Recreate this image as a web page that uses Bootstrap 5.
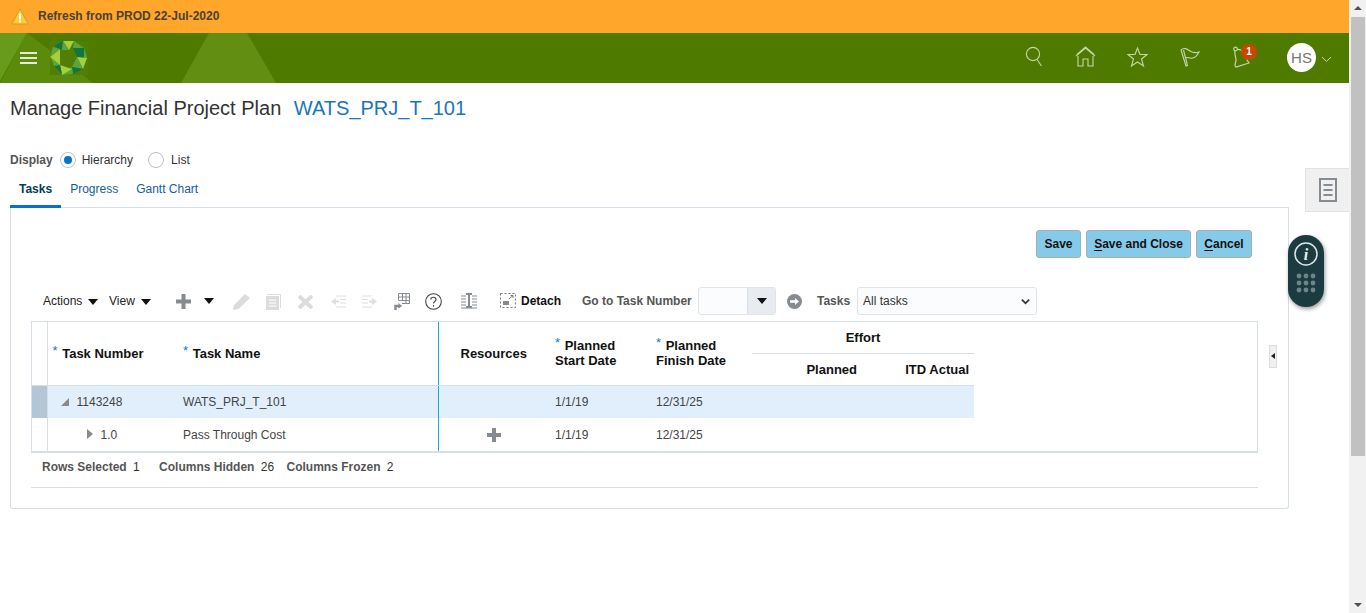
<!DOCTYPE html>
<html lang="en">
<head>
    <meta charset="UTF-8">
    <meta name="viewport" content="width=device-width, initial-scale=1.0">
    <title>Manage Financial Project Plan</title>
    <link href="https://cdn.jsdelivr.net/npm/bootstrap@5.3.0/dist/css/bootstrap.min.css" rel="stylesheet">
    <style>
        html, body { height: 100%; overflow: hidden; }
        body { font-family: "Liberation Sans", Arial, sans-serif; font-size: 12px; color: #333; background: #fff; }
        .page-shell { height: 613px; }
        .page-main { width: 1349px; height: 613px; position: relative; overflow: hidden; }
        .fake-scroll { width: 17px; height: 613px; background: #f1f1f1; position: relative; }
        .fake-thumb { width: 14px; height: 439px; margin: 17px 0 0 2px; background: #c1c1c1; }
        .fake-scroll::before, .fake-scroll::after { content: ""; position: absolute; left: 5px; border-left: 4px solid transparent; border-right: 4px solid transparent; }
        .fake-scroll::before { top: 6px; border-bottom: 4px solid #505050; }
        .fake-scroll::after { bottom: 6px; border-top: 4px solid #505050; }

        .warn-bar { height: 33px; background: #ffa62b; padding: 0 0 1px 11px; gap: 9px; font-weight: 700; color: #4a4233; }
        .brand-bar { height: 50px; background: #4f7a00; position: relative; overflow: hidden; }
        .brand-bar > svg.shapes { position: absolute; left: 0; top: 0; }
        .burger { position: absolute; left: 20px; top: 19px; width: 17px; height: 12px; }
        .logo-mark { position: absolute; left: 50px; top: 7px; }
        .top-icon { position: absolute; top: 13px; }
        .alert-dot { position: absolute; left: 1241px; top: 11px; width: 16px; height: 16px; border-radius: 50%; background: #c74600; color: #fff; font-size: 10px; font-weight: 700; line-height: 16px; text-align: center; }
        .user-dot { position: absolute; left: 1287px; top: 10px; width: 29px; height: 29px; border-radius: 50%; background: #fff; color: #777; font-size: 15px; line-height: 29px; text-align: center; }

        .page-title { font-size: 20px; font-weight: 400; color: #333; margin: 0; padding: 14px 0 0 10px; line-height: 23px; height: 37px; }
        .page-title a { color: #1a76b8; text-decoration: none; margin-left: 7px; }

        .display-row { padding: 30px 0 0 10px; height: 60px; line-height: 20px; }
        .display-row b { font-weight: 700; color: #555; }
        .fake-radio { width: 16px; height: 16px; border-radius: 50%; border: 1px solid #b9bec4; background: #fff; display: inline-block; position: relative; margin: 2px 6px 0 7px; }
        .fake-radio.on::after { content: ""; position: absolute; left: 3px; top: 3px; width: 8px; height: 8px; border-radius: 50%; background: #0572ce; }
        .fake-radio.off { margin-left: 15px; margin-right: 7px; }

        .tab-strip { height: 28px; margin-left: 10px; margin-right: 60px; border-bottom: 1px solid #d6dfe6; }
        .tab-link { height: 28px; padding: 0 9px; line-height: 19px; color: #145c9e; text-decoration: none; }
        .tab-link.on { color: #003d5b; font-weight: 700; border-bottom: 3px solid #0572ce; }

        .task-panel { width: 1279px; height: 301px; margin-left: 10px; border: 1px solid #d6dfe6; border-top: 0; border-radius: 0 0 3px 3px; position: relative; }
        .btn-row { padding-top: 22px; padding-right: 36px; gap: 5px; height: 76px; }
        .sky-btn { height: 28px; padding: 0; background: #85cbe9; border: 1px solid #a5aeb4; border-radius: 3px; color: #111; font-size: 12px; font-weight: 700; line-height: 25px; }
        .sky-btn u { text-underline-offset: 2px; }
        .btn-save { width: 45px; }
        .btn-close-save { width: 105px; }
        .btn-cancel { width: 56px; }

        .tool-row { height: 34px; padding-left: 32px; color: #222; position: relative; }
        .tool-row > * { position: absolute; top: 0; }
        .caret-dn { width: 0; height: 0; border-left: 5px solid transparent; border-right: 5px solid transparent; border-top: 6px solid #111; display: inline-block; }
        .go-label { font-weight: 700; color: #555; line-height: 34px; }
        .go-input { left: 687px; top: 3px; width: 78px; height: 28px; border: 1px solid #dfe4ea; border-radius: 3px; background: #fbfcfe; display: flex; }
        .go-input span { margin-left: auto; width: 28px; background: #e8ebef; border-left: 1px solid #d6dfe6; display: flex; align-items: center; justify-content: center; }
        .task-filter { left: 846px; top: 3px; width: 180px; height: 28px; padding: 0 0 0 5px; font-size: 12px; color: #333; border: 1px solid #dfe4ea; border-radius: 3px; background-color: #fbfcfe; background-image: url("data:image/svg+xml,%3csvg xmlns='http://www.w3.org/2000/svg' viewBox='0 0 10 7'%3e%3cpath d='M1 1.500 5 5.500 9 1.500' fill='none' stroke='%23333' stroke-width='2'/%3e%3c/svg%3e"); background-position: right 6px center; background-size: 9px 7px; }

        .grid-box { margin: 3px 30px 0 20px; height: 132px; border: 1px solid #d6dfe6; border-bottom-width: 2px; }
        .plan-grid { width: 942px; table-layout: fixed; border-collapse: collapse; margin: 0; }
        .plan-grid th { font-size: 13px; font-weight: 700; color: #111; line-height: 15px; padding: 0; vertical-align: middle; border-bottom: 1px solid #d6dfe6; }
        .plan-grid td { height: 33px; padding: 0; vertical-align: middle; color: #444; }
        .plan-grid .sel { border-right: 1px solid #d6dfe6; }
        .plan-grid .frozen { border-right: 1px solid #0fb0cc; }
        .plan-grid tr.hit td { background: #e1effc; }
        .plan-grid tr.hit td.sel { background: #b3c6d6; }
        .req { color: #1a76b8; font-weight: 400; position: relative; top: -3px; margin-right: 1px; }
        .pad-name { padding-left: 6px !important; }
        .pad-date { padding-left: 6px !important; }
        .pad-num { padding-left: 5px !important; }
        .pad-end { padding-right: 5px !important; }
        .tree-open { width: 0; height: 0; border-left: 8px solid transparent; border-bottom: 8px solid #8a8a8a; display: inline-block; margin: 0 8px 0 13px; }
        .tree-shut { width: 0; height: 0; border-top: 5.5px solid transparent; border-bottom: 5.5px solid transparent; border-left: 6px solid #8a8a8a; display: inline-block; margin: 0 8px 0 39px; vertical-align: 0; }

        .grid-foot { margin: 0 30px 0 20px; height: 35px; border-bottom: 1px solid #d6dfe6; padding: 6px 0 0 11px; line-height: 16px; }
        .grid-foot b { font-weight: 700; color: #555; }
        .grid-foot span { margin-left: 3px; margin-right: 16px; color: #333; }
        .grid-foot span:nth-of-type(2) { margin-right: 9px; }
        .grip { position: absolute; left: 1258px; top: 137px; width: 8px; height: 23px; background: #f0f0f0; border: 1px solid #dcdcdc; }
        .grip::after { content: ""; position: absolute; left: 1px; top: 7px; border-top: 3px solid transparent; border-bottom: 3px solid transparent; border-right: 4px solid #222; }

        .side-doc { position: absolute; left: 1305px; top: 168px; width: 44px; height: 44px; background: #f0f0f0; border: 1px solid #e0e3e6; border-right: 0; display: flex; align-items: center; justify-content: center; }
        .help-pill { position: absolute; left: 1288px; top: 235px; width: 36px; height: 72px; border-radius: 18px; background: #1c3b40; box-shadow: 1px 2px 4px rgba(0,0,0,.4); }
        .help-pill svg { display: block; }
    </style>
</head>
<body>
<div class="page-shell d-flex">
    <div class="page-main">
        <div class="warn-bar d-flex align-items-center">
            <svg width="18" height="17" viewBox="0 0 18 17"><path d="M9 1 17.200 16H.8Z" fill="#ffc93c" stroke="#c9a227"/><rect x="8" y="5.500" width="2" height="6" fill="#fff"/><rect x="8" y="12.500" width="2" height="2" fill="#fff"/></svg>
            <span>Refresh from PROD 22-Jul-2020</span>
        </div>

        <div class="brand-bar">
            <svg class="shapes" width="300" height="50">
                <path d="M0 50 27 0 93 50Z" fill="#5c8b0b"/>
                <path d="M0 0H27L0 48Z" fill="#689a1b"/>
                <path d="M181 50 209 0H247L276 50Z" fill="#628f12"/>
                <rect x="50" y="8" width="38" height="34" fill="#517f05"/>
            </svg>
            <div class="burger">
                <svg class="d-block" width="17" height="12"><path d="M0 1H17M0 6H17M0 11H17" stroke="#e4ecd6" stroke-width="2"/></svg>
            </div>
            <svg class="logo-mark" width="37" height="36" viewBox="0 0 37 36">
                <path d="M13 1 24 1 19 10Z" fill="#a6d03a"/>
                <path d="M24 1 34 8 23 8Z" fill="#5da33f"/>
                <path d="M23 8 34 8 34 20 27 17Z" fill="#10773e"/>
                <path d="M34 8 37 18 34 20Z" fill="#5da33f"/>
                <path d="M37 18 33 29 27 17Z" fill="#a6d03a"/>
                <path d="M27 17 33 29 22 27Z" fill="#5da33f"/>
                <path d="M22 27 33 29 23 34 Z" fill="#10773e"/>
                <path d="M23 34 12 35 22 27Z" fill="#5da33f"/>
                <path d="M10 25 22 29 12 35Z" fill="#a6d03a"/>
                <path d="M4 26 10 25 12 34Z" fill="#10773e"/>
                <path d="M1 18 10 25 4 26Z" fill="#5da33f"/>
                <path d="M0 17 10 9 10 25Z" fill="#a6d03a"/>
                <path d="M3 7 10 9 0 17Z" fill="#5da33f"/>
                <path d="M4 6 13 1 12 10Z" fill="#10773e"/>
                <path d="M13 1 19 10 12 10Z" fill="#5da33f"/>
            </svg>

            <svg class="top-icon" style="left:1025px" width="19" height="22" viewBox="0 0 19 22" fill="none" stroke="#c5d6a8" stroke-width="1.100"><circle cx="8" cy="8" r="6.600"/><path d="M12 13.500 16.500 20"/></svg>
            <svg class="top-icon" style="left:1075px" width="21" height="22" viewBox="0 0 21 22" fill="none" stroke="#c5d6a8" stroke-width="1.100"><path d="M1 10 10.500 2 20 10M2 8.500 10.500 1 19 8.500"/><path d="M3 10V20H8V13H13V20H18V10"/></svg>
            <svg class="top-icon" style="left:1127px" width="21" height="22" viewBox="0 0 21 22" fill="none" stroke="#c5d6a8" stroke-width="1.100"><path d="M10.500 2 13 8.500H20L14.500 13 16.500 20 10.500 16 4.500 20 6.500 13 1 8.500H8Z"/></svg>
            <svg class="top-icon" style="left:1180px" width="20" height="22" viewBox="0 0 20 22" fill="none" stroke="#c5d6a8" stroke-width="1.100"><path d="M1 4C4 1 7 3 10 5 13 7 16 7 19 6 17 10 14 13 10 12 8 11.500 7 11 5 12"/><path d="M1 4 6 20 7.500 19.500 3.500 4"/></svg>
            <svg class="top-icon" style="left:1232px" width="20" height="22" viewBox="0 0 20 22" fill="none" stroke="#c5d6a8" stroke-width="1.200"><circle cx="3.500" cy="3" r="1.800"/><path d="M5 3.500C8 3 10 4 13 7L15 14 17 17 4 21C2 20 3 18 4 15 4.500 12 2 8 3 5"/></svg>
            <div class="alert-dot">1</div>
            <div class="user-dot">HS</div>
            <svg class="top-icon" style="left:1321px;top:23px" width="11" height="7" viewBox="0 0 11 7" fill="none" stroke="#c5d6a8"><path d="M1 1 5.500 5.500 10 1"/></svg>
        </div>

        <h1 class="page-title">Manage Financial Project Plan <a href="#">WATS_PRJ_T_101</a></h1>

        <div class="display-row d-flex align-items-start">
            <b>Display</b>
            <span class="fake-radio on"></span><span>Hierarchy</span>
            <span class="fake-radio off"></span><span>List</span>
        </div>

        <div class="tab-strip d-flex">
            <a class="tab-link on" href="#">Tasks</a>
            <a class="tab-link" href="#">Progress</a>
            <a class="tab-link" href="#">Gantt Chart</a>
        </div>

        <div class="task-panel">
            <div class="btn-row d-flex justify-content-end align-items-start">
                <button class="sky-btn btn-save" type="button">Save</button>
                <button class="sky-btn btn-close-save" type="button"><u>S</u>ave and Close</button>
                <button class="sky-btn btn-cancel" type="button"><u>C</u>ancel</button>
            </div>

            <div class="tool-row">
                <span style="left:32px;line-height:34px">Actions</span>
                <i class="caret-dn" style="left:77px;top:15px"></i>
                <span style="left:98px;line-height:34px">View</span>
                <i class="caret-dn" style="left:130px;top:15px"></i>
                <svg style="left:165px;top:10px" width="15" height="15"><path d="M5.500 0H9.500V5.500H15V9.500H9.500V15H5.500V9.500H0V5.500H5.500Z" fill="#858b90"/></svg>
                <i class="caret-dn" style="left:193px;top:14px"></i>
                <svg style="left:222px;top:9px" width="18" height="17" viewBox="0 0 18 17"><path d="M0 17 1 12 12 1 17 5 5.500 16Z" fill="#dcdcdc"/></svg>
                <svg style="left:255px;top:10px" width="15" height="16" viewBox="0 0 15 16"><path d="M1 0H15V14H14V1H1Z" fill="#dcdcdc"/><path d="M0 2H13V16H0Z" fill="#dcdcdc"/><path d="M3 6H10M3 9H10M3 12H10" stroke="#fff"/></svg>
                <svg style="left:287px;top:11px" width="15" height="14" viewBox="0 0 15 14"><path d="M1 1 14 13M14 1 1 13" stroke="#dcdcdc" stroke-width="4"/></svg>
                <svg style="left:319px;top:11px" width="16" height="13" viewBox="0 0 16 13"><path d="M6 1H16M10 4.500H16M10 8H16M6 12H16" stroke="#dedede"/><path d="M1 6.500 6 3V10Z" fill="#dedede"/><rect x="5" y="5.500" width="4" height="2" fill="#dedede"/></svg>
                <svg style="left:351px;top:11px" width="16" height="13" viewBox="0 0 16 13"><path d="M0 1H10M0 4.500H6M0 8H6M0 12H10" stroke="#dedede"/><path d="M15 6.500 10 3V10Z" fill="#dedede"/><rect x="7" y="5.500" width="4" height="2" fill="#dedede"/></svg>
                <svg style="left:383px;top:9px" width="16" height="17" viewBox="0 0 16 17" fill="none" stroke="#858b90"><path d="M4.500 .5H15.500V10.500H8M8.500 .5V8M12 .5V10M4.500 4H15.500M4.500 7.500H15.500M4.500 .5V7"/><path d="M1.500 17V13H6" stroke-width="2.500"/><path d="M4.500 10.500 7.500 13 4.500 15" fill="#858b90"/></svg>
                <svg style="left:414px;top:9px" width="17" height="17" viewBox="0 0 17 17" fill="none" stroke="#444" stroke-width="1.100"><circle cx="8.500" cy="8.500" r="7.800"/><path d="M5.800 6.500C5.800 3.500 11 3.500 11 6.500 11 8.500 8.500 8.500 8.500 10.500"/><path d="M8.500 12V13.500"/></svg>
                <svg style="left:450px;top:9px" width="16" height="16" viewBox="0 0 16 16" fill="none" stroke="#858b90"><path d="M0 3H5M0 6H5M0 9H5M0 12H5M11 3H16M11 6H16M11 9H16M11 12H16M0 15H16"/><path d="M5 1H11M5 14H11M8 1V14" stroke-width="2"/></svg>
                <svg style="left:489px;top:9px" width="16" height="15" viewBox="0 0 16 15" fill="none" stroke="#777"><path d="M.5 .5H15.500V14.500H.5Z" stroke-dasharray="2 2"/><path d="M9 6 13 2.500M10.500 2.500H13V5"/><rect x="3" y="8" width="6" height="4" fill="#888" stroke="none"/></svg>
                <b style="left:510px;line-height:34px;color:#111">Detach</b>
                <span class="go-label" style="left:571px">Go to Task Number</span>
                <div class="go-input"><span><i class="caret-dn"></i></span></div>
                <svg style="left:776px;top:10px" width="15" height="15" viewBox="0 0 15 15"><circle cx="7.500" cy="7.500" r="7.500" fill="#858b90"/><path d="M3 6.300H8V4L12 7.500 8 11V8.700H3Z" fill="#fff"/></svg>
                <span class="go-label" style="left:806px">Tasks</span>
                <select class="form-select task-filter"><option>All tasks</option></select>
            </div>

            <div class="grid-box">
                <table class="plan-grid">
                    <colgroup>
                        <col style="width:15px"><col style="width:130px"><col style="width:261px"><col style="width:111px">
                        <col style="width:101px"><col style="width:102px"><col style="width:110px"><col style="width:112px">
                    </colgroup>
                    <thead>
                        <tr style="height:31px">
                            <th rowspan="2" class="sel"></th>
                            <th rowspan="2" class="pad-num"><span class="req">*</span> Task Number</th>
                            <th rowspan="2" class="frozen pad-name"><span class="req">*</span> Task Name</th>
                            <th rowspan="2" class="text-center">Resources</th>
                            <th rowspan="2" class="pad-date"><span class="req">*</span> Planned<br>Start Date</th>
                            <th rowspan="2" class="pad-date"><span class="req">*</span> Planned<br>Finish Date</th>
                            <th colspan="2" class="text-center">Effort</th>
                        </tr>
                        <tr style="height:32px">
                            <th class="text-end pad-end">Planned</th>
                            <th class="text-end pad-end">ITD Actual</th>
                        </tr>
                    </thead>
                    <tbody>
                        <tr class="hit">
                            <td class="sel"></td>
                            <td><i class="tree-open"></i>1143248</td>
                            <td class="frozen pad-name">WATS_PRJ_T_101</td>
                            <td></td><td class="pad-date">1/1/19</td><td class="pad-date">12/31/25</td><td></td><td></td>
                        </tr>
                        <tr>
                            <td class="sel"></td>
                            <td><i class="tree-shut"></i>1.0</td>
                            <td class="frozen pad-name">Pass Through Cost</td>
                            <td class="text-center"><svg width="14" height="14"><path d="M5 0H9V5H14V9H9V14H5V9H0V5H5Z" fill="#858b90"/></svg></td>
                            <td class="pad-date">1/1/19</td><td class="pad-date">12/31/25</td><td></td><td></td>
                        </tr>
                    </tbody>
                </table>
            </div>

            <div class="grid-foot">
                <b>Rows Selected</b> <span>1</span>
                <b>Columns Hidden</b> <span>26</span>
                <b>Columns Frozen</b> <span>2</span>
            </div>
            <div class="grip"></div>
        </div>

        <div class="side-doc">
            <svg width="18" height="24" viewBox="0 0 18 24" fill="none" stroke="#858b90"><path d="M1 1H17V23H1Z" stroke-width="2"/><path d="M4.500 7H13.500M4.500 12H13.500M4.500 17H13.500" stroke-width="2"/></svg>
        </div>
        <div class="help-pill">
            <svg width="36" height="72" viewBox="0 0 36 72">
                <circle cx="18" cy="19" r="11" fill="none" stroke="#dfe6e6" stroke-width="1.500"/>
                <text x="18" y="25" font-family="Liberation Serif" font-style="italic" font-weight="700" font-size="16" fill="#e8eeee" text-anchor="middle">i</text>
                <g fill="#6d8488">
                    <circle cx="11" cy="41" r="2.400"/><circle cx="18" cy="41" r="2.400"/><circle cx="25" cy="41" r="2.400"/>
                    <circle cx="11" cy="48" r="2.400"/><circle cx="18" cy="48" r="2.400"/><circle cx="25" cy="48" r="2.400"/>
                    <circle cx="11" cy="55" r="2.400"/><circle cx="18" cy="55" r="2.400"/><circle cx="25" cy="55" r="2.400"/>
                </g>
            </svg>
        </div>
    </div>
    <div class="fake-scroll"><div class="fake-thumb"></div></div>
</div>
<script src="https://cdn.jsdelivr.net/npm/bootstrap@5.3.0/dist/js/bootstrap.bundle.min.js"></script>
</body>
</html>
